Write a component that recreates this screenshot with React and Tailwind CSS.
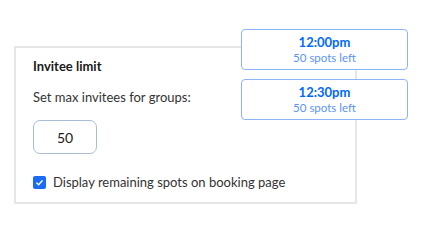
import React from "react";

function Slot({ time }) {
  return (
    <div className="w-[167px] h-[41px] bg-white border border-[#8db4f7] rounded-[4px] flex flex-col items-center justify-center">
      <div className="text-[13px] leading-[16px] font-bold text-[#0069ff]">{time}</div>
      <div className="text-[11.5px] leading-[15px] text-[#5b93f5]">50 spots left</div>
    </div>
  );
}

export default function App() {
  return (
    <div className="relative w-[441px] h-[245px] bg-white overflow-hidden" style={{ fontFamily: "Lato, 'Noto Sans', sans-serif" }}>
      <div className="pt-[46px] pl-[14px]">
        <div className="w-[343px] h-[158px] border-2 border-[#e6e6e6] pl-[17px] pt-[9px] text-[#1a1a1a]">
          <div className="text-[13px] leading-[18px] font-bold">Invitee limit</div>
          <div className="mt-[13px] text-[13px] leading-[18px] text-[#333]">Set max invitees for groups:</div>
          <div className="mt-[14px] w-[64px] h-[34px] rounded-[7px] border border-[#a9bcd8] flex items-center justify-center text-[14px] text-[#1a1a1a]">50</div>
          <div className="mt-[19px] flex items-center gap-[7px]">
            <div className="w-[13px] h-[13px] rounded-[2px] bg-[#1a6cf5] flex items-center justify-center">
              <svg width="9" height="9" viewBox="0 0 10 10"><path d="M2 5.5 L4 7.5 L8 3" fill="none" stroke="white" strokeWidth="1.5" strokeLinecap="round" strokeLinejoin="round"/></svg>
            </div>
            <div className="text-[13px] leading-[18px] text-[#333]">Display remaining spots on booking page</div>
          </div>
        </div>
      </div>
      <div className="absolute left-[241px] top-[29px] flex flex-col gap-[9px]">
        <Slot time="12:00pm" />
        <Slot time="12:30pm" />
      </div>
    </div>
  );
}
